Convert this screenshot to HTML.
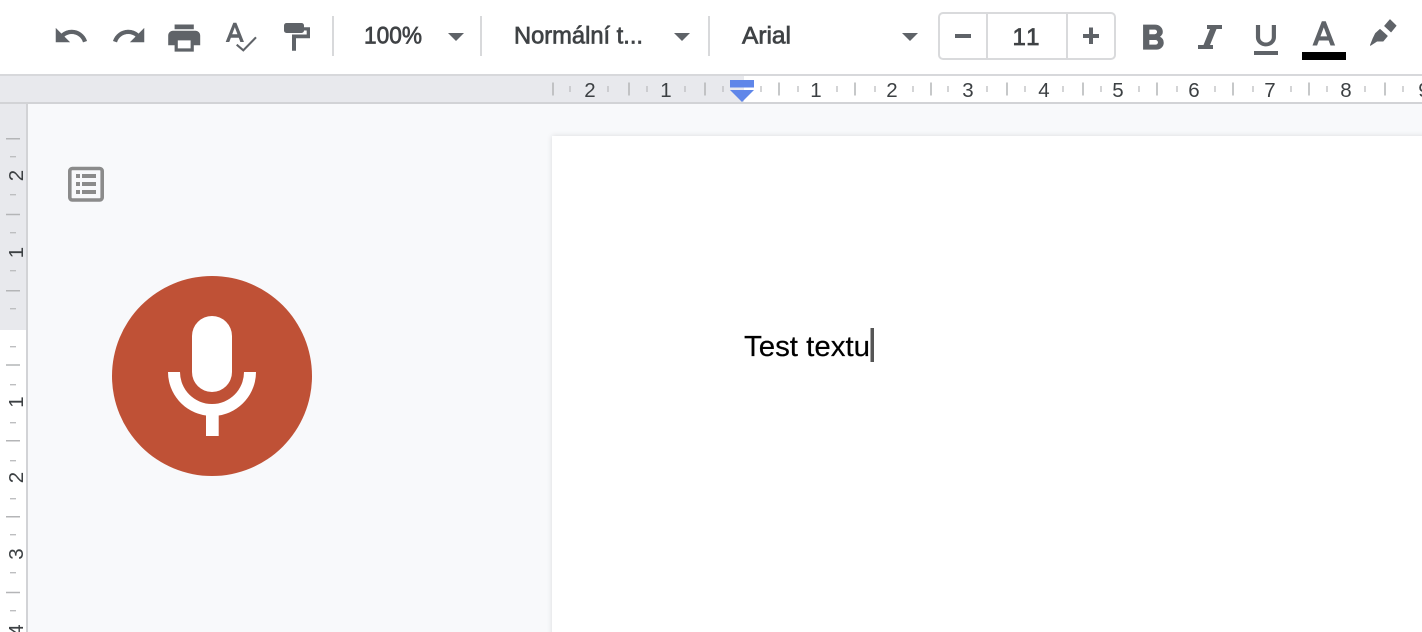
<!DOCTYPE html>
<html lang="cs">
<head>
<meta charset="utf-8">
<title>Test textu</title>
<style>
html,body{margin:0;padding:0;width:1422px;height:632px;overflow:hidden;background:#f8f9fb}
svg{display:block;position:absolute;left:0;top:0}
text{font-family:"Liberation Sans",Arial,sans-serif}
.tb{font-size:24px;fill:#3f4245;stroke:#3f4245;stroke-width:.7px}
.rn{font-size:20.5px;fill:#3c4043;text-anchor:middle}
.ic{fill:#5f6368}
.hv{stroke:#5f6368;stroke-width:.35px}
</style>
</head>
<body>
<svg width="1422" height="632" viewBox="0 0 1422 632" xmlns="http://www.w3.org/2000/svg">
<defs>
<filter id="sh" x="-5%" y="-5%" width="110%" height="110%"><feGaussianBlur stdDeviation="3"/></filter>
</defs>
<rect width="1422" height="632" fill="#f8f9fb"/>

<!-- Toolbar -->
<rect width="1422" height="74" fill="#fff"/>
<path class="ic hv" transform="translate(53,18) scale(1.5)" d="M12.5 8c-2.65 0-5.05.99-6.9 2.6L2 7v9h9l-3.62-3.62c1.39-1.16 3.16-1.88 5.12-1.88 3.54 0 6.55 2.31 7.6 5.5l2.37-.78C21.08 11.03 17.15 8 12.5 8z"/>
<path class="ic hv" transform="translate(111,18) scale(1.5)" d="M18.4 10.6C16.55 8.99 14.15 8 11.500 8c-4.65 0-8.58 3.03-9.96 7.22L3.9 16c1.05-3.19 4.05-5.5 7.6-5.5 1.95 0 3.73.72 5.12 1.88L13 16h9V7l-3.6 3.6z"/>
<path class="ic" transform="translate(165,18) scale(1.6)" d="M19 8H5c-1.66 0-3 1.34-3 3v6h4v4h12v-4h4v-6c0-1.66-1.34-3-3-3zm-3 11H8v-5h8v5zm2-14.900H6V3h12z M18 3H6v4h12V3z"/>
<path class="ic hv" transform="translate(222.5,18.6) scale(1.45)" d="M12.45 16h2.09L9.43 3H7.57L2.46 16h2.09l1.12-3h5.64l1.14 3zm-6.02-5L8.5 5.48 10.57 11H6.43z"/>
<path fill="none" stroke="#5f6368" stroke-width="2.1" d="M236.700 44.700l6.600 5.600 12.700-13"/>
<rect x="284" y="23" width="20" height="10" rx="2.500" class="ic"/>
<path class="ic" d="M304 27.300h6v11h-14v12.400h-4V34.500h14.700v-4H304z"/>

<rect x="332" y="16" width="2" height="40" fill="#d8d9db"/>
<rect x="480" y="16" width="2" height="40" fill="#d8d9db"/>
<rect x="708" y="16" width="2" height="40" fill="#d8d9db"/>

<text class="tb" x="364" y="43.5" textLength="58" lengthAdjust="spacingAndGlyphs">100%</text>
<path class="ic" d="M448 33h16l-8 8z"/>
<text class="tb" x="514" y="43.5" textLength="129" lengthAdjust="spacingAndGlyphs">Normální t...</text>
<path class="ic" d="M674 33h16l-8 8z"/>
<text class="tb" x="742" y="43.5" textLength="49" lengthAdjust="spacingAndGlyphs">Arial</text>
<path class="ic" d="M902 33h16l-8 8z"/>

<!-- Font size -->
<rect x="939" y="13" width="176" height="46" rx="4" fill="#fff" stroke="#d9dadc" stroke-width="2"/>
<rect x="986" y="13" width="2" height="46" fill="#d9dadc"/>
<rect x="1066" y="13" width="2" height="46" fill="#d9dadc"/>
<rect x="955" y="34" width="16" height="4" class="ic"/>
<path class="ic" d="M1083 34h6v-6.500h4V34h6v4h-6v6h-4v-6h-6z"/>
<text class="tb" x="1027" y="45" text-anchor="middle" style="letter-spacing:2px">11</text>

<path class="ic hv" transform="translate(1130.4,18) scale(1.86,1.74)" d="M15.6 10.79c.97-.67 1.65-1.77 1.65-2.79 0-2.26-1.75-4-4-4H7v14h7.04c2.09 0 3.71-1.7 3.71-3.79 0-1.52-.86-2.82-2.15-3.42zM10 6.5h3c.83 0 1.5.67 1.5 1.5s-.67 1.5-1.5 1.5h-3v-3zm3.5 9H10v-3h3.5c.83 0 1.5.67 1.5 1.5s-.67 1.5-1.5 1.5z"/>
<path class="ic" d="M1207 25h15v4h-5.500l-6.500 16h3v4h-15v-4h5.500l6.500-16h-3z"/>
<path class="ic" transform="translate(1245.9,20.500) scale(1.67,1.52)" d="M12 17c3.31 0 6-2.69 6-6V3h-2.5v8c0 1.93-1.57 3.5-3.5 3.5S8.5 12.93 8.5 11V3H6v8c0 3.31 2.69 6 6 6z"/>
<rect x="1254" y="51" width="24" height="4" class="ic"/>
<path class="ic" stroke="#5f6368" stroke-width=".5" transform="translate(1304,16.7) scale(1.65,1.67)" d="M11 3L5.5 17h2.25l1.12-3h6.25l1.12 3h2.25L13 3h-2zm-1.38 9L12 5.67 14.38 12H9.62z"/>
<rect x="1302" y="52" width="44" height="8" fill="#000"/>
<path class="ic" stroke="#5f6368" stroke-width="1" stroke-linejoin="round" d="M1390 19.800l6 5.900-5 6.100-6.300-5.900zM1380 29.500l7.200 6.500-4.200 5h-6l-6.500 4.200 2.800-7 2.300-4.700z"/>

<!-- Horizontal ruler -->
<rect y="74" width="1422" height="30" fill="#fff"/>
<rect y="76" width="744" height="26" fill="#e8e9ed"/>
<rect y="74" width="1422" height="2" fill="#d7d8db"/>
<rect y="102" width="1422" height="2" fill="#d2d3d6"/>
<path fill="none" stroke="#b4b5b7" stroke-width="1.5" d="M553 82.5v13M629 82.5v13M705 82.5v13M779 82.5v13M855 82.5v13M931 82.5v13M1007 82.5v13M1083 82.5v13M1157 82.5v13M1233 82.5v13M1309 82.5v13M1385 82.5v13"/>
<path fill="none" stroke="#bdbec0" stroke-width="1.3" d="M570 86v6M608 86v6M647 86v6M685 86v6M723 86v6M761 86v6M798 86v6M837 86v6M875 86v6M913 86v6M948 86v6M987 86v6M1025 86v6M1063 86v6M1101 86v6M1139 86v6M1177 86v6M1215 86v6M1253 86v6M1291 86v6M1327 86v6M1365 86v6M1403 86v6"/>
<text class="rn" x="590" y="97">2</text>
<text class="rn" x="666" y="97">1</text>
<text class="rn" x="816" y="97">1</text>
<text class="rn" x="892" y="97">2</text>
<text class="rn" x="968" y="97">3</text>
<text class="rn" x="1044" y="97">4</text>
<text class="rn" x="1118" y="97">5</text>
<text class="rn" x="1194" y="97">6</text>
<text class="rn" x="1270" y="97">7</text>
<text class="rn" x="1346" y="97">8</text>
<text class="rn" x="1424" y="97">9</text>
<rect x="730" y="80" width="24" height="7.5" fill="#5f86e9"/>
<path d="M730 90h24l-12 12z" fill="#5f86e9"/>

<!-- Vertical ruler -->
<rect x="0" y="104" width="26" height="226" fill="#e8e9ed"/>
<rect x="0" y="330" width="26" height="302" fill="#fff"/>
<rect x="26" y="104" width="2" height="528" fill="#d2d3d6"/>
<path fill="none" stroke="#b4b5b7" stroke-width="1.5" d="M6 138.7h14M6 214.5h14M6 290.7h14M6 365h14M6 440.7h14M6 516.7h14M6 592.5h14"/>
<path fill="none" stroke="#bdbec0" stroke-width="1.3" d="M10 156.7h6M10 194.7h6M10 232.7h6M10 270.7h6M10 308.7h6M10 346.7h6M10 384.7h6M10 422.7h6M10 460.7h6M10 498.7h6M10 534.7h6M10 572.7h6M10 610.7h6"/>
<text class="rn" transform="translate(23,175.5) rotate(-90)">2</text>
<text class="rn" transform="translate(23,252.5) rotate(-90)">1</text>
<text class="rn" transform="translate(23,402) rotate(-90)">1</text>
<text class="rn" transform="translate(23,477.5) rotate(-90)">2</text>
<text class="rn" transform="translate(23,554) rotate(-90)">3</text>
<text class="rn" transform="translate(23,630) rotate(-90)">4</text>

<!-- Outline icon -->
<rect x="69.8" y="168.5" width="32.4" height="31.5" rx="2.5" fill="none" stroke="#8b8b8b" stroke-width="3.6"/>
<path fill="#8b8b8b" d="M76 174h4v4h-4zM82 174h14v4H82zM76 182h4v4h-4zM82 182h14v4H82zM76 190h4v4h-4zM82 190h14v4H82z"/>

<!-- Microphone -->
<circle cx="212" cy="376" r="100" fill="#bf5136"/>
<rect x="192" y="316" width="40" height="76" rx="20" fill="#fff"/>
<path fill="#fff" d="M168 372h12a32 32 0 0 0 64 0h12a44 44 0 0 1-37.300 43.500V436h-12.700v-20.500A44 44 0 0 1 168 372z"/>

<!-- Page -->
<rect x="552" y="136" width="880" height="510" fill="#000" opacity=".12" filter="url(#sh)"/>
<rect x="552" y="136" width="870" height="496" fill="#fff"/>
<text x="744" y="356" style="font-size:29px;stroke:#000;stroke-width:.2px" fill="#000" textLength="126" lengthAdjust="spacingAndGlyphs">Test textu</text>
<rect x="870.500" y="328" width="3.500" height="34" fill="#555"/>
</svg>
</body>
</html>
